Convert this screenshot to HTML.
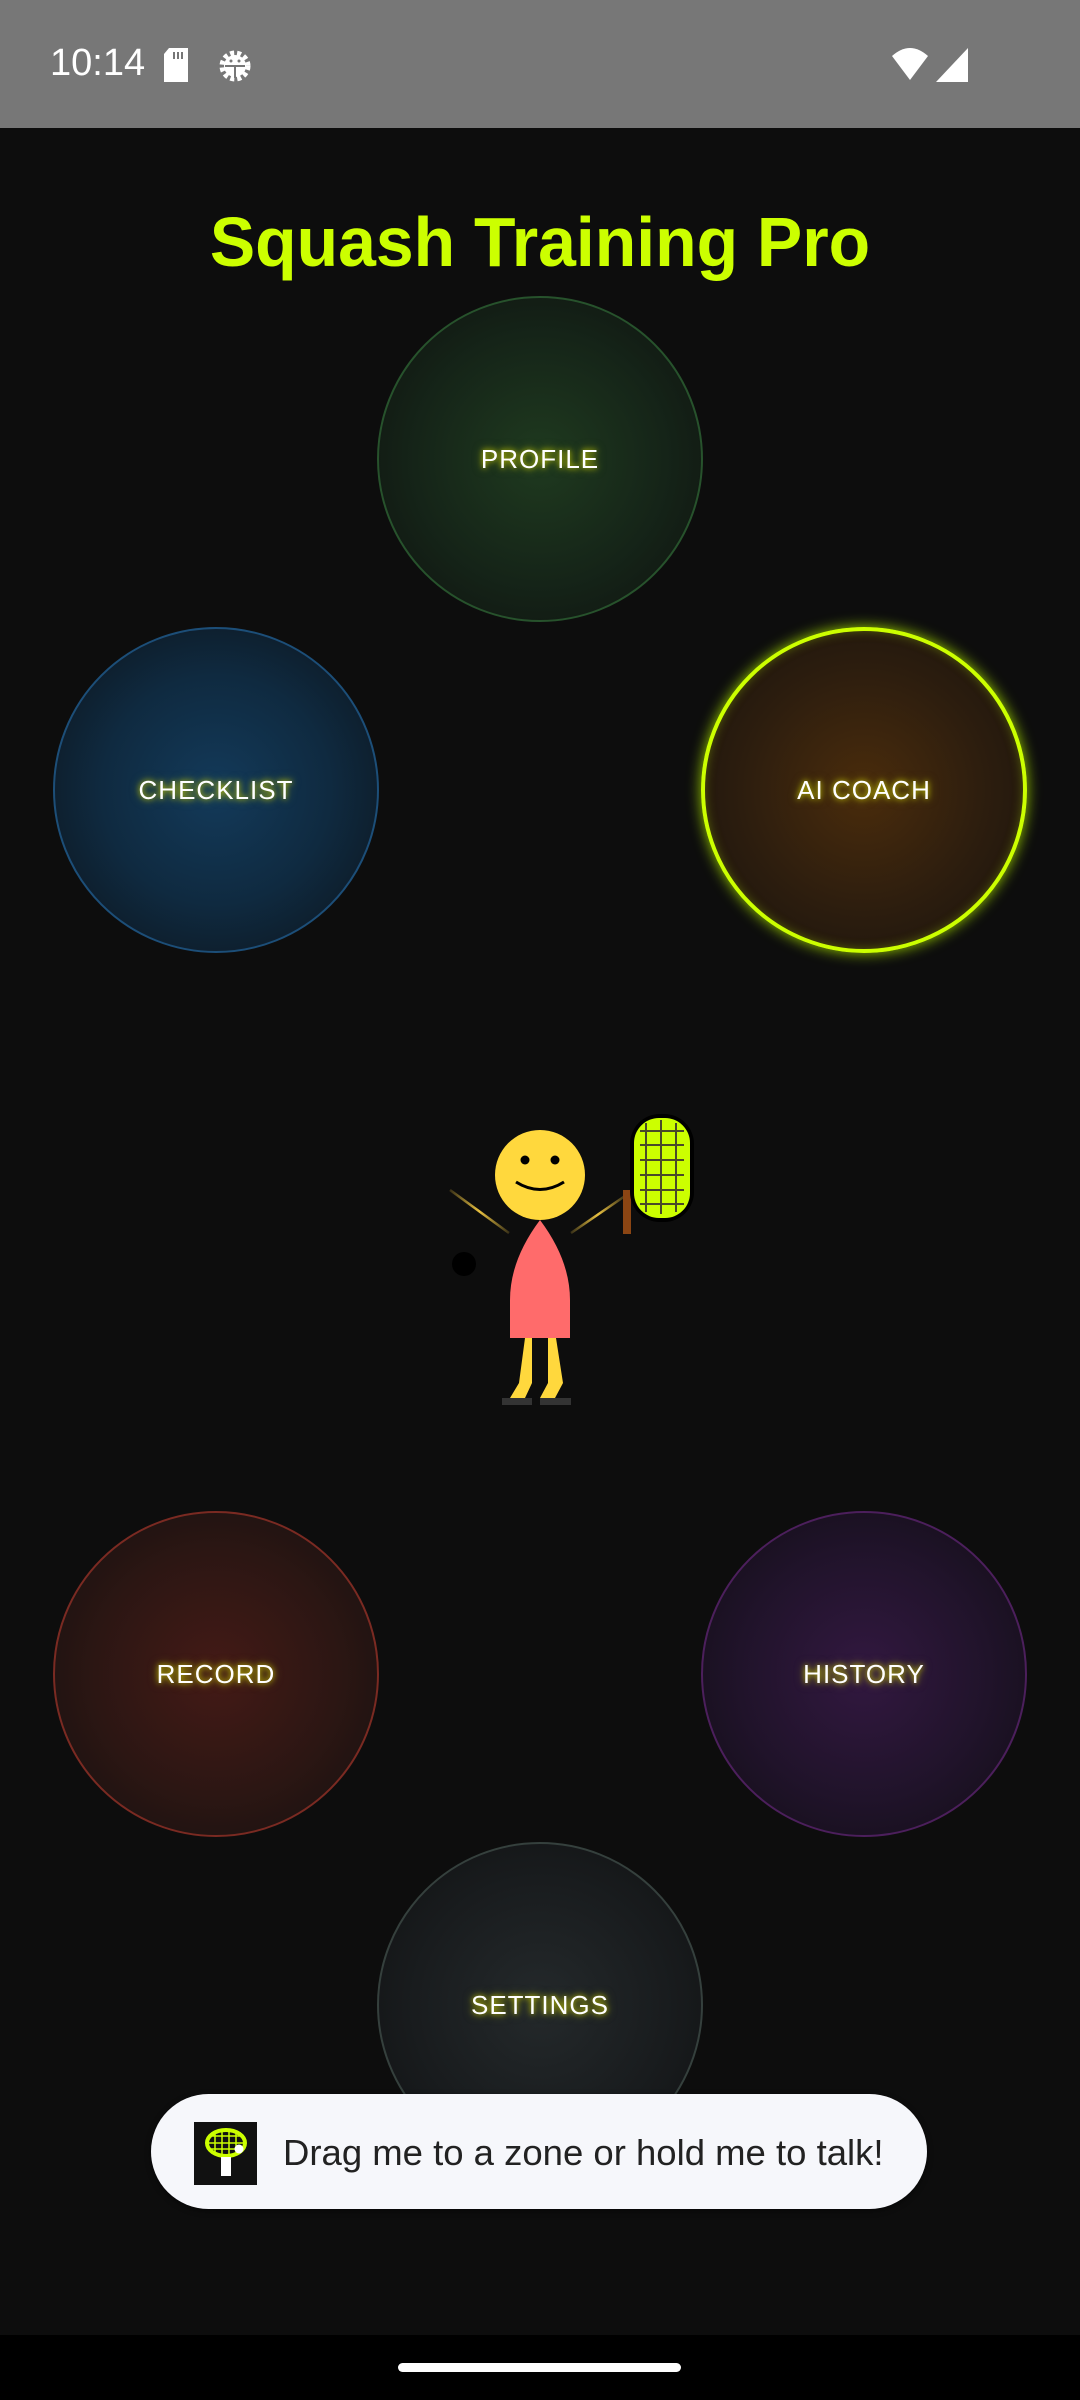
<!DOCTYPE html>
<html><head><meta charset="utf-8"><style>
*{margin:0;padding:0;box-sizing:border-box}
html,body{width:1080px;height:2400px;overflow:hidden;background:#0d0d0d;font-family:"Liberation Sans",sans-serif}
.sb{position:absolute;left:0;top:0;width:1080px;height:128px;background:#777}
.time{position:absolute;left:50px;top:42px;color:#fff;font-size:38px}
.title{position:absolute;left:0;width:1080px;top:202px;text-align:center;color:#ccff00;font-size:70px;font-weight:bold;transform:scaleX(0.97)}
.c{position:absolute;width:326px;height:326px;border-radius:50%;display:flex;align-items:center;justify-content:center;color:#fff;font-size:26px;letter-spacing:1px;text-shadow:0 0 6px #cc0,0 0 10px rgba(200,220,0,.5)}
.nav{position:absolute;left:0;top:2335px;width:1080px;height:65px;background:#000}
.handle{position:absolute;left:398px;top:2363px;width:283px;height:9px;border-radius:5px;background:#fff}
.toast{position:absolute;left:151px;top:2094px;width:776px;height:115px;border-radius:58px;background:#f6f7fb;box-shadow:0 2px 6px rgba(0,0,0,.5)}
.toast span{position:absolute;left:132px;top:38px;font-size:36.5px;color:#222}
</style></head><body>
<div class="sb">
<div class="time">10:14</div>
<svg style="position:absolute;left:162px;top:48px" width="28" height="34"><path d="M7 0H26V34H2V6Z" fill="#fff"/><path d="M12 4v7M16 4v7M20 4v7" stroke="#777" stroke-width="2"/></svg>
<svg style="position:absolute;left:215px;top:46px" width="40" height="40" viewBox="0 0 40 40"><circle cx="20" cy="20" r="13" fill="none" stroke="#fff" stroke-width="5" stroke-dasharray="4 3"/><circle cx="20" cy="20" r="11" fill="#fff"/><path d="M10 20H30M20 20V32" stroke="#777" stroke-width="2"/><circle cx="16" cy="15" r="1.5" fill="#777"/><circle cx="24" cy="15" r="1.5" fill="#777"/></svg>
<svg style="position:absolute;left:890px;top:46px" width="40" height="36"><path d="M2 10Q20-6 38 10L20 34Z" fill="#fff"/></svg>
<svg style="position:absolute;left:936px;top:48px" width="32" height="34"><path d="M32 0V34H0Z" fill="#fff"/></svg>
</div>
<div class="title">Squash Training Pro</div>

<div class="c" style="left:377px;top:296px;border:2px solid #27522c;background:radial-gradient(circle,#1f3a1f 0%,#152418 55%,#0e100e 100%)">PROFILE</div>
<div class="c" style="left:53px;top:627px;border:2px solid #1c4e78;background:radial-gradient(circle,#133a5a 0%,#0f2a40 50%,#0d1218 100%)">CHECKLIST</div>
<div class="c" style="left:701px;top:627px;border:4px solid #ccff00;box-shadow:0 0 14px #9c0,inset 0 0 10px rgba(160,200,0,.4);background:radial-gradient(circle,#4a2c0c 0%,#2c1d0e 55%,#17120c 100%)">AI COACH</div>
<div class="c" style="left:53px;top:1511px;border:2px solid #7a2a22;background:radial-gradient(circle,#441a16 0%,#2b1613 55%,#120f0f 100%)">RECORD</div>
<div class="c" style="left:701px;top:1511px;border:2px solid #4c1f5c;background:radial-gradient(circle,#321840 0%,#20132a 55%,#100d13 100%)">HISTORY</div>
<div class="c" style="left:377px;top:1842px;border:2px solid #35403d;background:radial-gradient(circle,#24292b 0%,#191c1e 55%,#101112 100%)">SETTINGS</div>

<svg style="position:absolute;left:420px;top:1080px" width="300" height="340" viewBox="420 1080 300 340">
<defs><linearGradient id="al" x1="0" x2="1"><stop offset="0" stop-color="#e8c040" stop-opacity=".2"/><stop offset=".5" stop-color="#e8c040"/><stop offset="1" stop-color="#e8c040" stop-opacity=".2"/></linearGradient></defs>
<line x1="450" y1="1190" x2="509" y2="1233" stroke="url(#al)" stroke-width="2.5"/>
<line x1="571" y1="1233" x2="625" y2="1196" stroke="url(#al)" stroke-width="2.5"/>
<circle cx="464" cy="1264" r="12" fill="#000"/>
<path d="M540 1220Q510 1260 510 1300V1338H570V1300Q570 1260 540 1220Z" fill="#ff6b6b"/>
<path d="M525 1338L519 1383L510 1398H525L532 1383V1338Z" fill="#ffd83d"/>
<path d="M548 1338V1383L540 1398H555L563 1383L556 1338Z" fill="#ffd83d"/>
<rect x="502" y="1398" width="30" height="7" fill="#333"/>
<rect x="540" y="1398" width="31" height="7" fill="#333"/>
<circle cx="540" cy="1175" r="45" fill="#ffd83d"/>
<circle cx="525" cy="1160" r="4.5" fill="#000"/><circle cx="555" cy="1160" r="4.5" fill="#000"/>
<path d="M516 1182Q540 1197 564 1182" fill="none" stroke="#000" stroke-width="3"/>
<rect x="623" y="1190" width="8" height="44" fill="#8b4513"/>
<rect x="630" y="1114" width="64" height="108" rx="30" fill="#000"/>
<rect x="634" y="1118" width="56" height="100" rx="25" fill="#ccff00"/>
<path d="M646 1123V1212M661 1120V1214M676 1123V1212M640 1131H684M640 1145H684M640 1160H684M640 1175H684M640 1190H684M640 1204H684" stroke="#4a4a2a" stroke-width="2"/>
</svg>

<div class="toast">
<svg style="position:absolute;left:43px;top:28px" width="63" height="63" viewBox="0 0 63 63"><rect width="63" height="63" fill="#111"/><ellipse cx="32" cy="21" rx="19" ry="13" fill="none" stroke="#ccff00" stroke-width="4"/><path d="M21 9V33M28 8V34M35 8V34M42 9V33M14 14H50M13 21H51M15 27H49" stroke="#ccff00" stroke-width="1.5"/><circle cx="45" cy="27" r="4.5" fill="#fff"/><rect x="27" y="35" width="10" height="19" fill="#fff"/></svg>
<span>Drag me to a zone or hold me to talk!</span>
</div>
<div class="nav"></div><div class="handle"></div>
</body></html>
